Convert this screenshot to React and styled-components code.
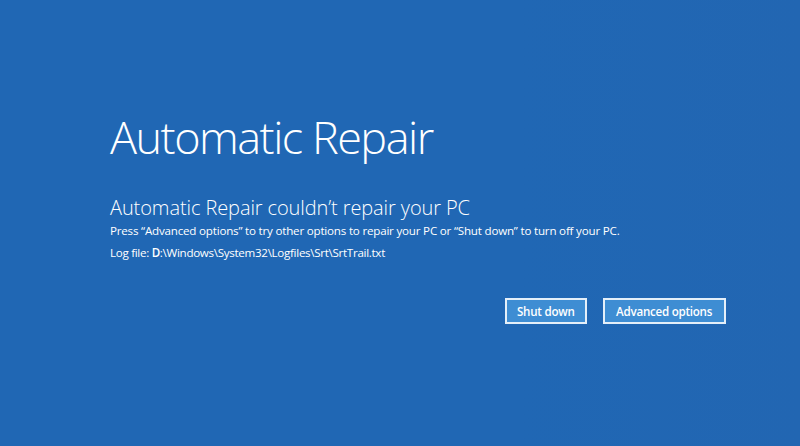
import React from "react";
import styled, { createGlobalStyle } from "styled-components";

const Global = createGlobalStyle`
  html, body { margin: 0; padding: 0; background: #2067b4; }
  #root { width: 800px; height: 446px; }
`;

const Screen = styled.div`
  width: 800px;
  height: 446px;
  background: linear-gradient(90deg, #2067b4 0%, #2067b4 65%, #2266b2 100%);
  color: #ffffff;
  font-family: "Open Sans", "Noto Sans", sans-serif;
  box-sizing: border-box;
  padding: 107px 0 0 110px;
  display: flex;
  flex-direction: column;
`;

const Title = styled.h1`
  margin: 0;
  font-weight: 300;
  font-size: 45px;
  line-height: 60px;
  letter-spacing: -1.5px;
`;

const Subtitle = styled.h2`
  margin: 29px 0 0 0;
  font-weight: 300;
  font-size: 20px;
  line-height: 24px;
  letter-spacing: -0.1px;
`;

const Line = styled.p`
  margin: ${(p) => p.$mt || 0}px 0 0 0;
  font-weight: 400;
  font-size: 11.6px;
  line-height: 16px;
  letter-spacing: ${(p) => p.$ls ?? -0.2}px;
`;

const Drive = styled.span`
  font-weight: 600;
`;

const Actions = styled.div`
  display: flex;
  gap: 16px;
  margin: 37px 0 0 395px;
`;

const Button = styled.button`
  box-sizing: border-box;
  height: 26px;
  padding: 0 ${(p) => p.$px}px;
  background: #3e8dd3;
  border: 2px solid #e4eff9;
  color: #ffffff;
  font-family: "Open Sans", "Noto Sans", sans-serif;
  font-weight: 600;
  font-size: 11.6px;
  letter-spacing: -0.25px;
  cursor: pointer;
`;

export default function App() {
  return (
    <>
      <Global />
      <Screen>
        <Title>Automatic Repair</Title>
        <Subtitle>Automatic Repair couldn’t repair your PC</Subtitle>
        <Line $mt={3}>
          Press “Advanced options” to try other options to repair your PC or “Shut down” to turn off your PC.
        </Line>
        <Line $mt={6} $ls={-0.3}>
          Log file: <Drive>D</Drive>:\Windows\System32\Logfiles\Srt\SrtTrail.txt
        </Line>
        <Actions>
          <Button $px={10}>Shut down</Button>
          <Button $px={11.5}>Advanced options</Button>
        </Actions>
      </Screen>
    </>
  );
}
